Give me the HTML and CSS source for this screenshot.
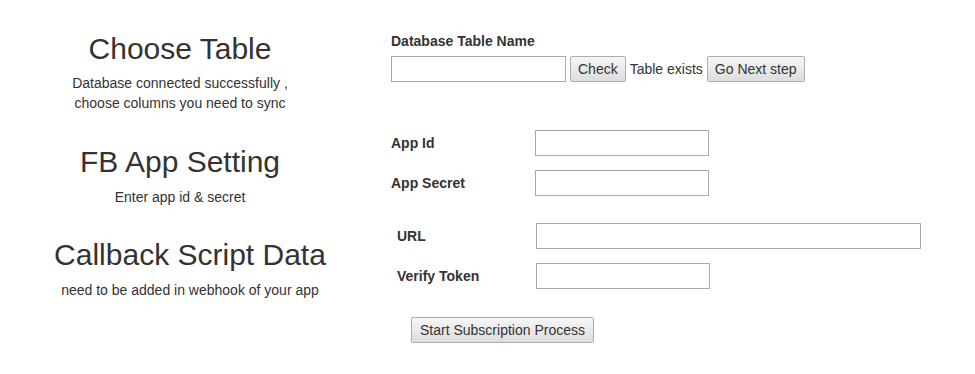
FILE: index.html
```html
<!DOCTYPE html>
<html>
<head>
<meta charset="utf-8">
<link rel="stylesheet" href="styles.css">
</head>
<body>
<div class="page">
  <section class="row row-table">
    <div class="side">
      <h2 class="title">Choose Table</h2>
      <p class="desc">Database connected successfully ,<br>choose columns you need to sync</p>
    </div>
    <div class="main main-table">
      <label class="label top-label">Database Table Name</label>
      <div class="inline-row">
        <input class="field field-table" type="text">
        <button class="btn btn-inline" type="button">Check</button>
        <span class="status">Table exists</span>
        <button class="btn btn-inline" type="button">Go Next step</button>
      </div>
    </div>
  </section>

  <section class="row row-app">
    <div class="side">
      <h2 class="title">FB App Setting</h2>
      <p class="desc">Enter app id &amp; secret</p>
    </div>
    <div class="main main-app">
      <div class="field-row">
        <label class="label label-app">App Id</label>
        <input class="field" type="text">
      </div>
      <div class="field-row">
        <label class="label label-app">App Secret</label>
        <input class="field" type="text">
      </div>
    </div>
  </section>

  <section class="row row-callback">
    <div class="side side-callback">
      <h2 class="title">Callback Script Data</h2>
      <p class="desc">need to be added in webhook of your app</p>
    </div>
    <div class="main main-callback">
      <div class="field-row">
        <label class="label label-cb">URL</label>
        <input class="field field-url" type="text">
      </div>
      <div class="field-row">
        <label class="label label-cb">Verify Token</label>
        <input class="field" type="text">
      </div>
      <button class="btn btn-start" type="button">Start Subscription Process</button>
    </div>
  </section>
</div>
</body>
</html>
```

FILE: styles.css
```css
* { box-sizing: border-box; }

html, body {
  margin: 0;
  padding: 0;
  background: #ffffff;
}

body {
  font-family: "Liberation Sans", Arial, Helvetica, sans-serif;
  font-size: 14px;
  line-height: 20px;
  color: #333333;
}

.page {
  width: 975px;
}

.row {
  display: flex;
  align-items: flex-start;
}

.side {
  flex: 0 0 360px;
  width: 360px;
  text-align: center;
}

.side-callback {
  padding-left: 20px;
}

.title {
  margin: 32px 0 0;
  font-size: 30px;
  line-height: 33px;
  font-weight: normal;
  color: #333333;
}

.row-callback .title {
  margin-top: 31px;
}

.desc {
  margin: 8px 0 0;
  font-size: 14px;
  line-height: 20px;
}

.row-app .desc,
.row-callback .desc {
  margin-top: 9px;
}

.main {
  display: flex;
  flex-direction: column;
  align-items: flex-start;
}

.main-table {
  padding-left: 31px;
  padding-top: 31px;
}

.main-app {
  padding-left: 31px;
  padding-top: 17px;
  gap: 14px;
}

.main-callback {
  padding-left: 37px;
  padding-top: 16px;
  gap: 14px;
}

.label {
  font-weight: bold;
  font-size: 14px;
  line-height: 20px;
}

.top-label {
  margin-bottom: 5px;
}

.inline-row {
  display: flex;
  align-items: center;
  gap: 4px;
}

.field-row {
  display: flex;
  align-items: center;
}

.label-app { width: 144px; }
.label-cb { width: 139px; }

.field {
  width: 174px;
  height: 26px;
  margin: 0;
  padding: 2px 4px;
  border: 1px solid #a9a9a9;
  border-radius: 0;
  background: #ffffff;
  font-family: "Liberation Sans", Arial, sans-serif;
  font-size: 14px;
}

.field-table { width: 175px; }
.field-url { width: 385px; }

.status {
  line-height: 20px;
}

.btn {
  height: 26px;
  margin: 0;
  padding: 0 8px;
  border: 1px solid #adadad;
  border-radius: 2px;
  background: linear-gradient(#f6f6f6, #dddddd);
  font-family: "Liberation Sans", Arial, sans-serif;
  font-size: 14px;
  color: #333333;
  line-height: 24px;
}

.btn-inline {
  padding: 0 7px;
}

.btn-start {
  margin-top: 14px;
  margin-left: 14px;
}
```
